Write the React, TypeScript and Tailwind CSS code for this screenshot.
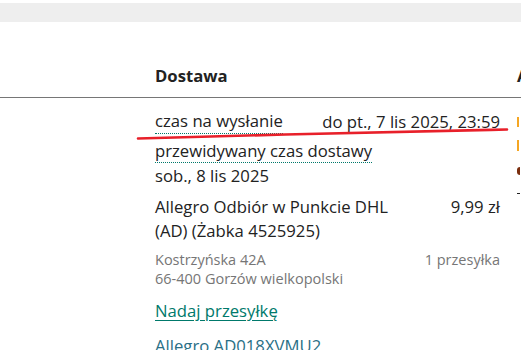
export default function App() {
  const font = { fontFamily: '"Open Sans", "Noto Sans", sans-serif' };

  return (
    <div className="relative w-[521px] h-[350px] overflow-hidden bg-white text-[#222222]" style={font}>
      <div className="h-[3px]" />
      <div className="h-[19px] bg-[#eeeeee]" />

      {/* header row */}
      <div className="flex h-[76px] items-end border-b border-[#767676] pb-[9px]">
        <div className="w-[155px] shrink-0" />
        <div className="w-[362px] shrink-0 text-[16.7px] font-bold leading-[24px]">Dostawa</div>
        <div className="text-[16.7px] font-bold leading-[24px]">Akcje</div>
      </div>

      {/* body row */}
      <div className="flex">
        <div className="w-[155px] shrink-0" />
        <div className="w-[345px] shrink-0 pt-[12px] text-[16.7px] leading-[24px]">
          <div className="flex justify-between">
            <span className="border-b border-dotted border-[#00796b] leading-[22px]">czas na wysłanie</span>
            <span>do pt., 7 lis 2025, 23:59</span>
          </div>
          <div className="mt-[5px]">
            <span className="border-b border-dotted border-[#00796b] leading-[22px]">przewidywany czas dostawy</span>
          </div>
          <div className="leading-[26px]">sob., 8 lis 2025</div>

          <div className="mt-[6px] flex justify-between">
            <div>
              Allegro Odbiór w Punkcie DHL
              <br />
              (AD) (Żabka 4525925)
            </div>
            <div>9,99 zł</div>
          </div>

          <div className="mt-[7px] flex justify-between text-[14.5px] leading-[19px] text-[#767676]">
            <div>
              Kostrzyńska 42A
              <br />
              66-400 Gorzów wielkopolski
            </div>
            <div>1 przesyłka</div>
          </div>

          <div className="mt-[11px]">
            <a href="#" className="text-[#00796b] underline underline-offset-[3px]">Nadaj przesyłkę</a>
          </div>

          <div className="mt-[11px] text-[#2a6f86]">Allegro AD018XVMU2</div>
        </div>

        {/* cut-off next column */}
        <div className="ml-[17px] flex flex-col pt-[19px]">
          <div className="h-[10px] w-[2px] bg-[#f5a623]" />
          <div className="mt-[13px] h-[11px] w-[2px] bg-[#f5a623]" />
          <div className="mt-[16px] h-[8px] w-[3px] rounded-l-full bg-[#7a2e0e]" />
          <div className="mt-[18px] h-[1px] w-[3px] bg-[#222222]" />
        </div>
      </div>

      {/* red hand-drawn marker line */}
      <svg className="pointer-events-none absolute left-0 top-0" width="521" height="350">
        <path
          d="M138 138.5 C 200 136.5, 250 135, 285 134.5 C 330 133.5, 420 131.5, 507 129.5"
          fill="none"
          stroke="#e8202a"
          strokeWidth="2.6"
          strokeLinecap="round"
        />
      </svg>
    </div>
  );
}
